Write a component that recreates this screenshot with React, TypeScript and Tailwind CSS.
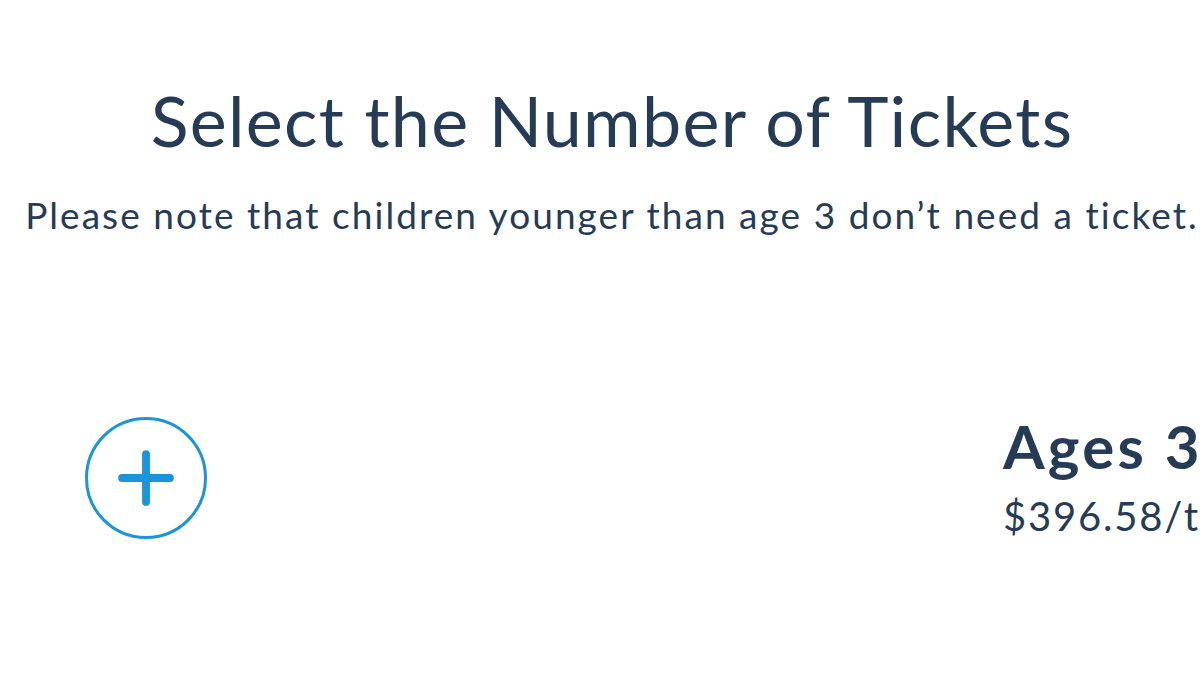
import { Plus } from 'lucide-react';

export default function App() {
  return (
    <div
      className="w-[1200px] h-[675px] overflow-hidden bg-white text-[#253b56]"
      style={{ fontFamily: 'Lato, "Open Sans", sans-serif' }}
    >
      {/* Header */}
      <div className="w-[1400px] pt-[77px] flex flex-col items-center -ml-[88px]">
        <h1 className="text-[70px] leading-[86px] font-normal tracking-[1.3px]">Select the Number of Tickets</h1>
        <p className="mt-[30px] text-[37px] leading-[44px] tracking-[2.05px]">
          Please note that children younger than age 3 don’t need a ticket.
        </p>
      </div>

      {/* Ticket row */}
      <div className="mt-[180px] flex items-start w-[1600px]">
        <div className="ml-[85px] w-[122px] h-[122px] rounded-full border-[3px] border-[#1b95d9] flex items-center justify-center">
          <Plus className="w-[82px] h-[82px] text-[#1b95d9]" strokeWidth={2.3} />
        </div>
        <div className="ml-[796px] -mt-[3px]">
          <div className="text-[60px] leading-[64px] font-bold tracking-[3.2px]">Ages 3+</div>
          <div className="mt-[15px] text-[40px] leading-[46px] tracking-[1.8px]">$396.58/ticket</div>
        </div>
      </div>
    </div>
  );
}
